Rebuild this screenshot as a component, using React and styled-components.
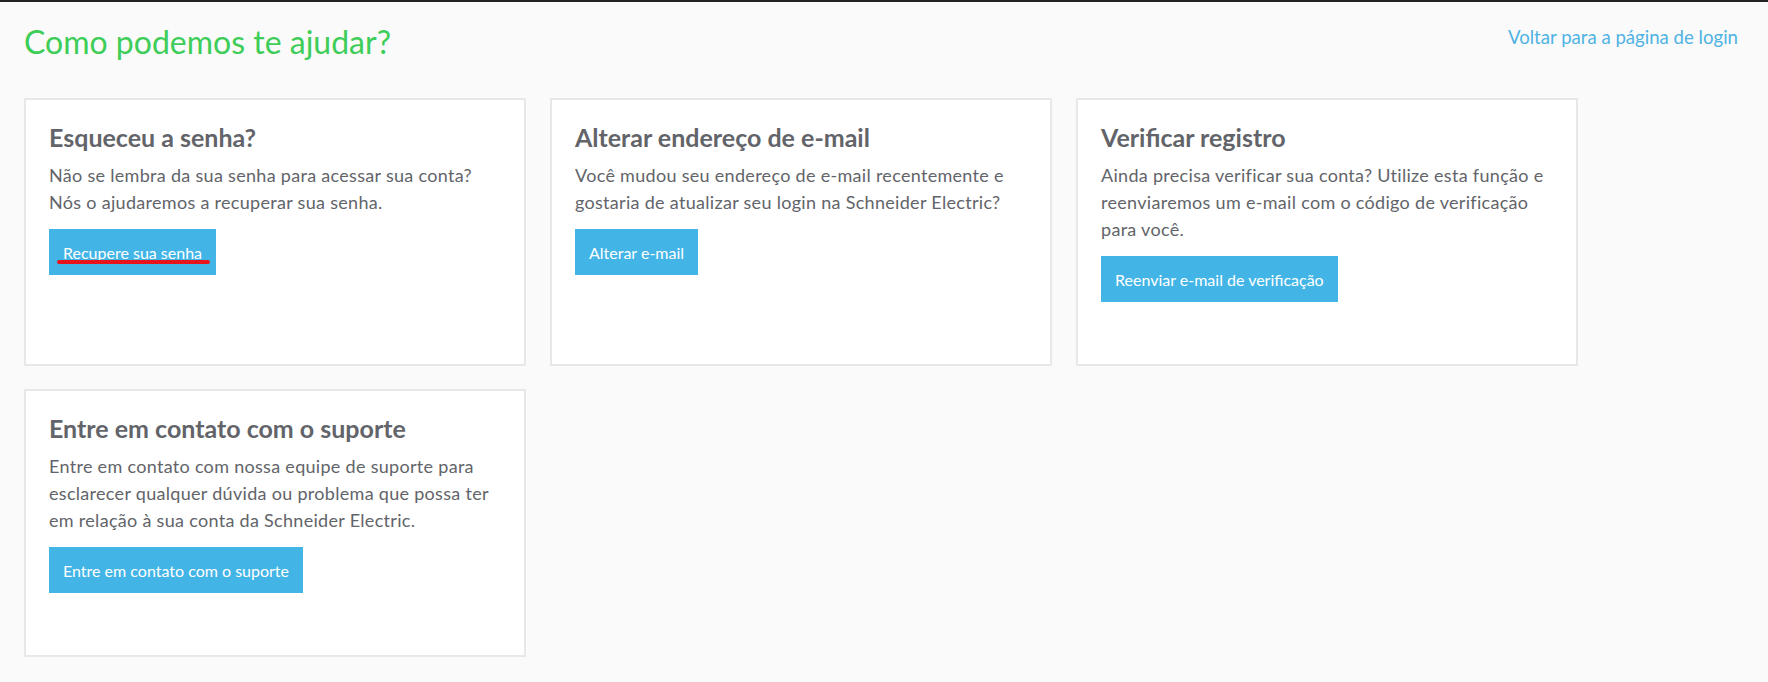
import styled, { createGlobalStyle } from "styled-components";

const GlobalStyle = createGlobalStyle`
  body {
    margin: 0;
    background: #fafafa;
    font-family: "Lato", "Noto Sans", sans-serif;
  }
`;

const Page = styled.div`
  min-height: 682px;
  box-sizing: border-box;
  border-top: 2px solid #222;
  padding: 0 30px 0 24px;
`;

const Header = styled.div`
  display: flex;
  justify-content: space-between;
  align-items: flex-start;
  padding-top: 19px;
  margin-bottom: 35px;
`;

const Title = styled.h1`
  margin: 0;
  font-size: 32px;
  font-weight: 400;
  line-height: 42px;
  color: #3dcd58;
`;

const BackLink = styled.a`
  margin-top: 5px;
  font-size: 18.6px;
  color: #4fb3e3;
  text-decoration: none;
  cursor: pointer;
`;

const Grid = styled.div`
  display: grid;
  grid-template-columns: repeat(3, 502px);
  grid-auto-rows: 268px;
  gap: 23px 24px;
`;

const Card = styled.div`
  box-sizing: border-box;
  background: #fff;
  border: 2px solid #e8e8e8;
  padding: 21px 23px;
  display: flex;
  flex-direction: column;
  align-items: flex-start;
`;

const CardTitle = styled.h2`
  margin: 0 0 9px;
  font-size: 25px;
  font-weight: 700;
  line-height: 32px;
  color: #626469;
`;

const CardText = styled.p`
  margin: 0 0 13px;
  font-size: 18px;
  letter-spacing: 0.3px;
  line-height: 27px;
  color: #626469;
`;

const Button = styled.button`
  position: relative;
  border: none;
  background: #42b4e6;
  color: #fff;
  font-family: "Lato", "Noto Sans", sans-serif;
  font-size: 16px;
  height: 46px;
  padding: 0 14px;
  cursor: pointer;
`;

const Mark = styled.span`
  position: absolute;
  left: 8px;
  right: 6px;
  bottom: 11px;
  height: 4px;
  border-radius: 2px;
  background: #e8141b;
`;

const cards = [
  {
    title: "Esqueceu a senha?",
    text: "Não se lembra da sua senha para acessar sua conta? Nós o ajudaremos a recuperar sua senha.",
    button: "Recupere sua senha",
    marked: true,
  },
  {
    title: "Alterar endereço de e-mail",
    text: "Você mudou seu endereço de e-mail recentemente e gostaria de atualizar seu login na Schneider Electric?",
    button: "Alterar e-mail",
  },
  {
    title: "Verificar registro",
    text: "Ainda precisa verificar sua conta? Utilize esta função e reenviaremos um e-mail com o código de verificação para você.",
    button: "Reenviar e-mail de verificação",
  },
  {
    title: "Entre em contato com o suporte",
    text: "Entre em contato com nossa equipe de suporte para esclarecer qualquer dúvida ou problema que possa ter em relação à sua conta da Schneider Electric.",
    button: "Entre em contato com o suporte",
  },
];

export default function App() {
  return (
    <>
      <GlobalStyle />
      <Page>
        <Header>
          <Title>Como podemos te ajudar?</Title>
          <BackLink>Voltar para a página de login</BackLink>
        </Header>
        <Grid>
          {cards.map((c) => (
            <Card key={c.title}>
              <CardTitle>{c.title}</CardTitle>
              <CardText>{c.text}</CardText>
              <Button>
                {c.button}
                {c.marked && <Mark />}
              </Button>
            </Card>
          ))}
        </Grid>
      </Page>
    </>
  );
}
